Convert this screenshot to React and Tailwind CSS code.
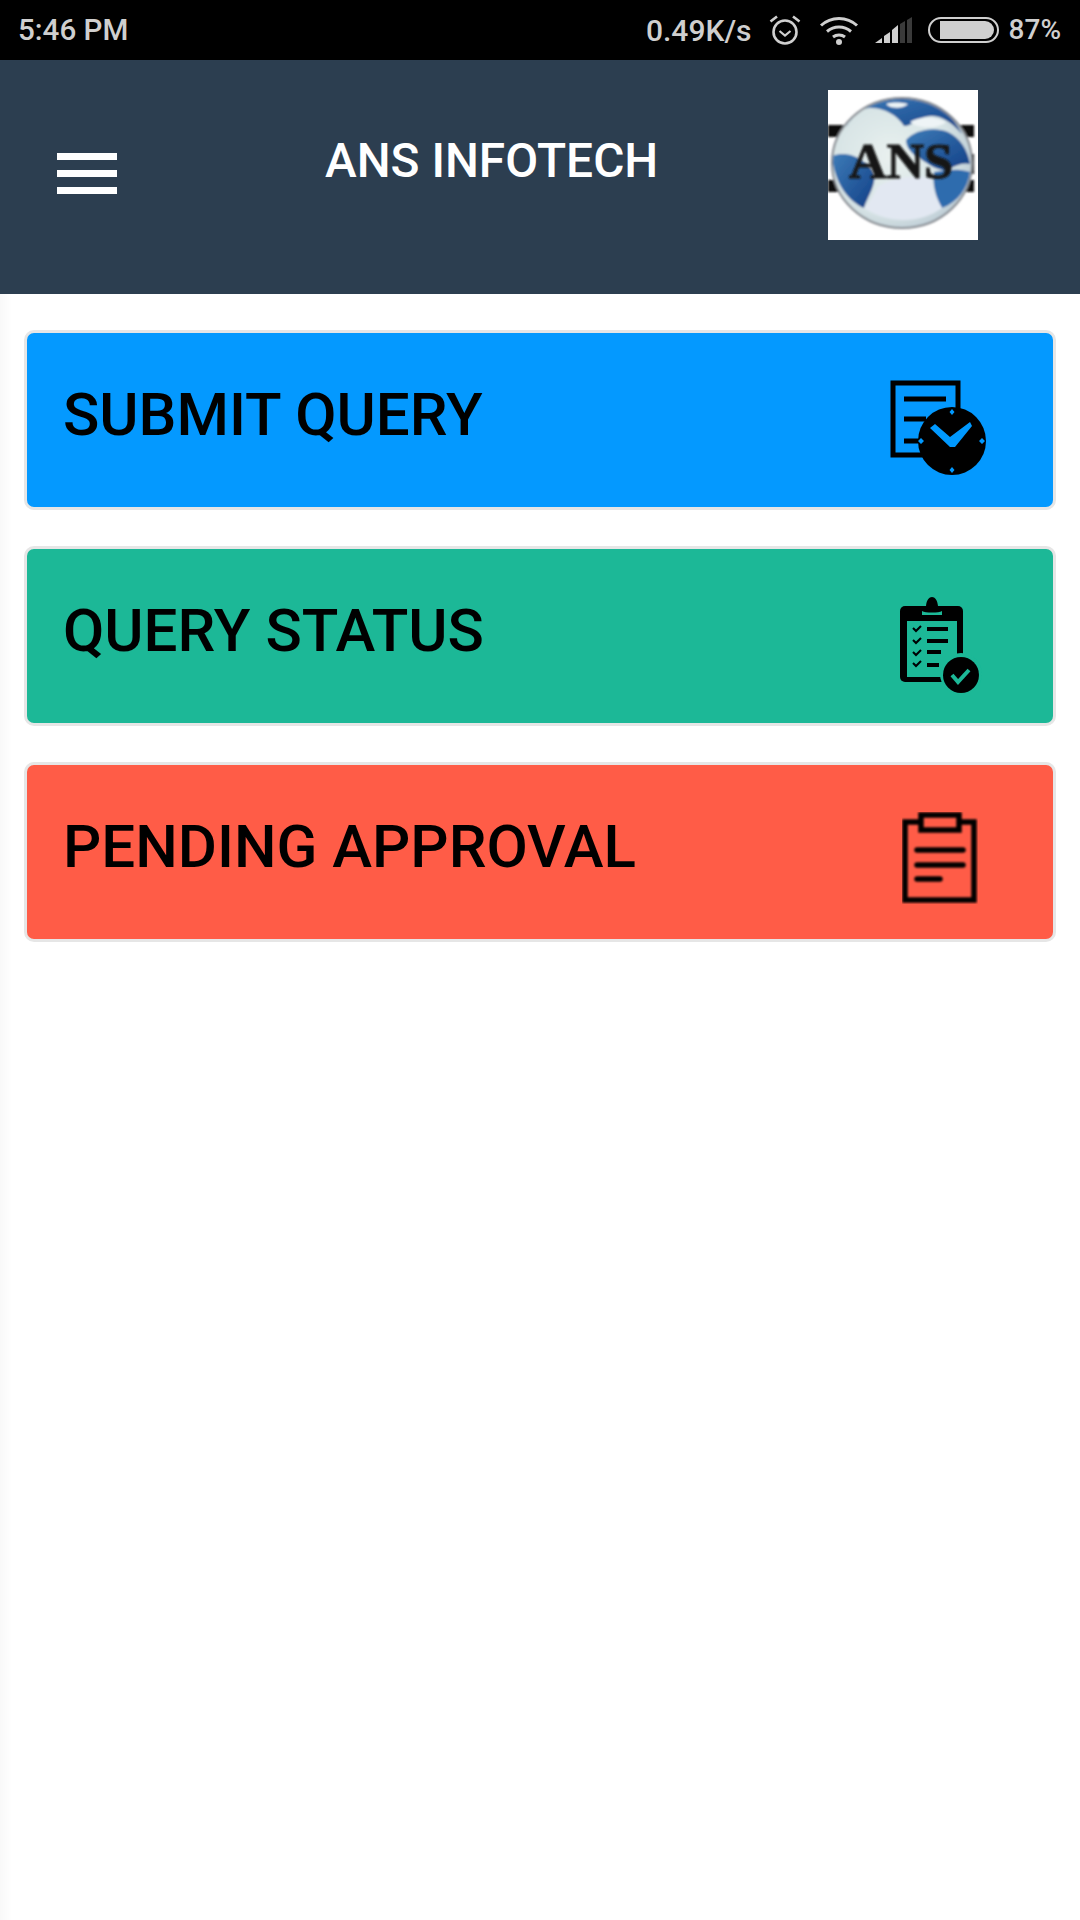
const CARDS = [
  { label: 'SUBMIT QUERY', bg: 'bg-[#0499ff]', icon: <QueryClockIcon /> },
  { label: 'QUERY STATUS', bg: 'bg-[#1cb897]', icon: <ChecklistIcon /> },
  { label: 'PENDING APPROVAL', bg: 'bg-[#ff5c47]', icon: <ClipboardIcon /> },
];

function AlarmIcon() {
  return (
    <svg width="34" height="34" viewBox="0 0 34 34" fill="none" stroke="#cfcfcf" strokeWidth="2.6">
      <circle cx="17" cy="19" r="11.5" />
      <path d="M11.500 18l5.500 4.500 5.500-4.500" strokeWidth="2.2" />
      <path d="M2.500 8.500L9 3.500M31.500 8.500L25 3.500" strokeWidth="2.6" />
    </svg>
  );
}

function WifiIcon() {
  return (
    <svg width="40" height="30" viewBox="0 0 40 30" fill="none" stroke="#cfcfcf" strokeWidth="3">
      <path d="M2 10.500C12 1 28 1 38 10.500" />
      <path d="M8 16.500c7-6 17-6 24 0" />
      <path d="M14 22c3.500-2.800 8.500-2.800 12 0" />
      <circle cx="20" cy="27" r="3" fill="#cfcfcf" stroke="none" />
    </svg>
  );
}

function SignalIcon() {
  return (
    <svg width="38" height="26" viewBox="0 0 38 26">
      <path d="M0 26l7-5v5z" fill="#cfcfcf" />
      <path d="M9 19l6-4v11H9z" fill="#cfcfcf" />
      <path d="M17 13l6-5v18h-6z" fill="#cfcfcf" />
      <path d="M25 7l5-3v22h-5z" fill="#3a3a3a" />
      <path d="M32 3l5-3v26h-5z" fill="#3a3a3a" />
    </svg>
  );
}

function BatteryIcon() {
  return (
    <div className="flex h-[26px] w-[71px] items-center rounded-full border-2 border-[#cfcfcf] pl-[10px] pr-[3px]">
      <div className="h-[18px] w-full rounded-r-full bg-[#cfcfcf]" />
    </div>
  );
}

function StatusBar() {
  return (
    <div className="flex h-[60px] items-center justify-between bg-black pl-[18px] pr-[19px] font-['Roboto',sans-serif] text-[28px] font-medium text-[#cfcfcf]">
      <span className="text-[29.6px]">5:46 PM</span>
      <div className="flex items-center">
        <span className="text-[30px]">0.49K/s</span>
        <div className="ml-[16px]"><AlarmIcon /></div>
        <div className="ml-[17px]"><WifiIcon /></div>
        <div className="ml-[16px]"><SignalIcon /></div>
        <div className="ml-[15px]"><BatteryIcon /></div>
        <span className="ml-[10px]">87%</span>
      </div>
    </div>
  );
}

function AnsLogo() {
  return (
    <svg width="150" height="150" viewBox="0 0 150 150" className="block bg-white">
      <defs>
        <radialGradient id="globe" cx="0.42" cy="0.45" r="0.65">
          <stop offset="0" stopColor="#e9f1ef" />
          <stop offset="0.7" stopColor="#d5e2e4" />
          <stop offset="1" stopColor="#b4c4d0" />
        </radialGradient>
        <linearGradient id="sea" x1="0" y1="0" x2="1" y2="1">
          <stop offset="0" stopColor="#3d7cb8" />
          <stop offset="1" stopColor="#123f86" />
        </linearGradient>
        <clipPath id="disc"><ellipse cx="74" cy="73" rx="69" ry="64" /></clipPath>
        <filter id="soft"><feGaussianBlur stdDeviation="1.1" /></filter>
      </defs>
      <g filter="url(#soft)">
        <rect x="0" y="35" width="146" height="12" fill="#0a0a0a" />
        <rect x="0" y="90" width="146" height="12" fill="#0a0a0a" />
        <rect x="140" y="64" width="6" height="20" fill="#0a0a0a" />
        <ellipse cx="74" cy="73" rx="70" ry="65" fill="url(#globe)" stroke="#85898f" strokeWidth="2" />
        <g clipPath="url(#disc)">
          <path d="M18 38C30 16 52 6 76 8c26 0 46 12 58 36-16-18-30-22-44-14-6 4-10 6-14 6C68 22 46 14 34 20 28 24 22 30 18 38z" fill="url(#sea)" />
          <path d="M78 50c8-10 28-14 42-8 12 6 20 18 22 32-8-2-14 2-24 6-12 0-20-8-30-14-6-4-10-10-10-16z" fill="url(#sea)" />
          <path d="M4 66c10-4 22-2 32 6 8 6 12 12 10 20-2 10-8 18-10 26C18 110 6 90 4 66z" fill="url(#sea)" />
          <path d="M106 82c10-2 24-4 36 0-2 16-12 30-28 36-6-10-10-24-8-36z" fill="#2d6cae" />
          <path d="M82 32c10-6 24-6 36 0-6 6-26 8-36 0zM58 14c6-2 14-2 22 0-4 4-16 6-22 0z" fill="#eef4f6" />
          <path d="M36 118c24 16 56 16 78 0-6-10-10-20-10-30-20-4-40 0-54 8-4 8-8 16-14 22z" fill="#e2e8f2" />
        </g>
      </g>
      <text x="73" y="88" textAnchor="middle" textLength="104" lengthAdjust="spacingAndGlyphs" fontFamily="'Liberation Serif', serif" fontWeight="700" fontSize="50" fill="#161616" stroke="#161616" strokeWidth="1" filter="url(#soft)">ANS</text>
    </svg>
  );
}

function Header() {
  return (
    <header className="flex h-[234px] bg-[#2c3e50]">
      <div className="ml-[57px] mt-[93px] flex h-[41px] w-[60px] flex-col justify-between">
        <div className="h-[7px] bg-white" />
        <div className="h-[7px] bg-white" />
        <div className="h-[7px] bg-white" />
      </div>
      <h1 className="ml-[208px] mt-[74px] h-fit font-['Roboto',sans-serif] text-[47.8px] font-medium leading-[54px] text-white">ANS INFOTECH</h1>
      <div className="ml-[170px] mt-[30px] h-fit"><AnsLogo /></div>
    </header>
  );
}

function QueryClockIcon() {
  return (
    <svg width="100" height="100" viewBox="0 0 100 100" fill="none" stroke="#000">
      <defs><filter id="blurA"><feGaussianBlur stdDeviation="0.6" /></filter></defs>
      <g filter="url(#blurA)">
        <path d="M3 3h65v72H3z" strokeWidth="5" />
        <path d="M14 19h42M14 39h22M14 61h16" strokeWidth="5" />
        <circle cx="62" cy="61" r="34" fill="#000" stroke="none" />
        <path d="M40 48l5-4 15 13 20-15 2 4-17 21h-5z" fill="#0499ff" stroke="none" />
        <path d="M62 29l2.500 3-2.500 3-2.500-3zM62 87l2.500 3-2.500 3-2.500-3zM31 58l3 3-3 3-3-3zM92 58l3 3-3 3-3-3z" fill="#0499ff" stroke="none" />
      </g>
    </svg>
  );
}

function ChecklistIcon() {
  return (
    <svg width="84" height="100" viewBox="0 0 84 100" fill="none" stroke="#000">
      <defs><filter id="blurB"><feGaussianBlur stdDeviation="0.6" /></filter></defs>
      <g filter="url(#blurB)">
        <path d="M7 10h53a5 5 0 0 1 5 5v55L50 86H7a5 5 0 0 1-5-5V15a5 5 0 0 1 5-5z" fill="#000" stroke="none" />
        <rect x="9" y="25" width="50" height="56" fill="#1cb897" stroke="none" />
        <path d="M19 18c0-6 5-8 9-8 1-12 11-12 12 0 4 0 9 2 9 8v6H19z" fill="#000" stroke="none" />
        <path d="M24 15c3 2 17 2 20 0v4H24z" fill="#1cb897" stroke="none" />
        <path d="M15 32l3 3 5-5M15 44l3 3 5-5M15 56l3 3 5-5M15 67l3 3 5-5" strokeWidth="2" />
        <path d="M29 33h21M29 45h21M29 56h14M29 69h12" strokeWidth="4" />
        <circle cx="63" cy="78" r="21" fill="#1cb897" stroke="none" />
        <circle cx="63" cy="79" r="18" fill="#000" stroke="none" />
        <path d="M54 79l6 7 11-12" stroke="#1cb897" strokeWidth="4" />
      </g>
    </svg>
  );
}

function ClipboardIcon() {
  return (
    <svg width="76" height="92" viewBox="0 0 76 92" fill="none" stroke="#000" strokeWidth="5.5">
      <defs><filter id="blurC"><feGaussianBlur stdDeviation="0.8" /></filter></defs>
      <g filter="url(#blurC)">
        <path d="M18 10H3v78h69V10H58" />
        <path d="M19 3h38v15H19z" />
        <path d="M15 38h46M15 53h46M15 67h23" strokeLinecap="round" />
      </g>
    </svg>
  );
}

function MenuCard({ label, bg, icon }) {
  return (
    <div className={`flex h-[180px] rounded-[10px] border-[3px] border-[#e6e6e6] ${bg}`}>
      <span className="ml-[36px] mt-[47px] h-fit flex-1 font-['Roboto',sans-serif] text-[60px] font-medium leading-[70px] text-black">{label}</span>
      <div className="mr-[63px] mt-[47px] flex w-[100px] justify-center">{icon}</div>
    </div>
  );
}

export default function App() {
  return (
    <div className="flex min-h-[1920px] flex-col bg-white">
      <StatusBar />
      <Header />
      <main className="flex flex-1 flex-col gap-[36px] bg-[linear-gradient(to_right,#f9f9f9,#ffffff_12px)] px-[24px] pt-[36px]">
        {CARDS.map((card) => <MenuCard key={card.label} {...card} />)}
      </main>
    </div>
  );
}
